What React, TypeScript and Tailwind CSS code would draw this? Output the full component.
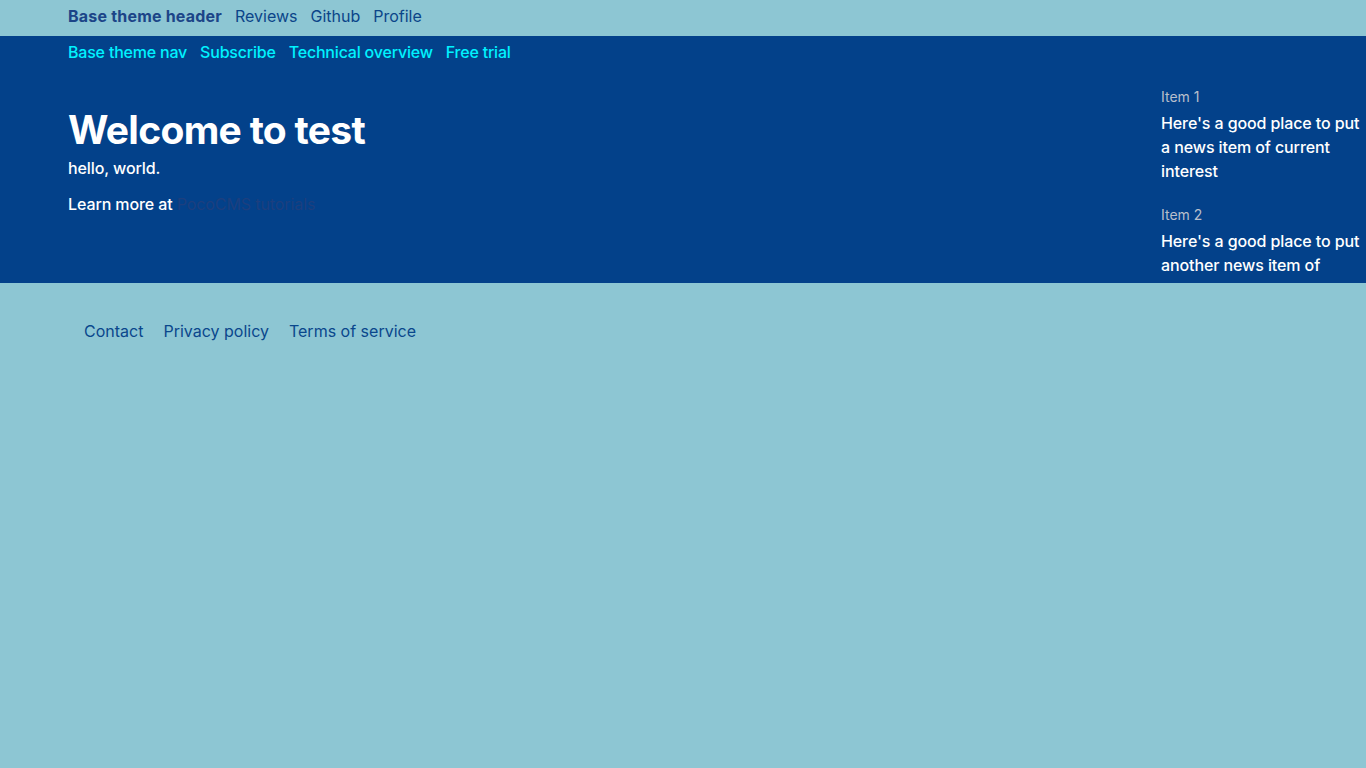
import React from 'react';

const headerLinks = ['Reviews', 'Github', 'Profile'];
const navLinks = ['Base theme nav', 'Subscribe', 'Technical overview', 'Free trial'];
const footerLinks = ['Contact', 'Privacy policy', 'Terms of service'];

const news = [
  { label: 'Item 1', text: "Here's a good place to put a news item of current interest" },
  { label: 'Item 2', text: "Here's a good place to put another news item of current interest" },
];

const App = () => {
  return (
    <div className="min-h-screen bg-[#8dc6d3] font-['Inter',sans-serif] text-base">
      {/* Header */}
      <header className="h-9 flex items-center gap-[13px] pl-[68px] pb-1 text-[#043f88]">
        <span className="font-bold text-[#1c4588] tracking-[0.2px]">Base theme header</span>
        {headerLinks.map((l) => (
          <a key={l} href="#" className="text-[#0b4589]">{l}</a>
        ))}
      </header>

      {/* Main */}
      <section className="h-[247px] bg-[#03418a] overflow-hidden flex">
        <div className="flex-1 pl-[68px]">
          <nav className="flex gap-[13px] pt-1 leading-6 font-medium tracking-[-0.2px] text-[#00f2ff]">
            {navLinks.map((l) => (
              <a key={l} href="#">{l}</a>
            ))}
          </nav>
          <h1 className="mt-[42px] text-[39px] leading-[48px] font-bold text-white tracking-[-0.7px]">Welcome to test</h1>
          <p className="mt-[2px] text-white font-medium leading-6 tracking-[-0.1px]">hello, world.</p>
          <p className="mt-3 text-white font-medium leading-6 tracking-[-0.1px]">
            Learn more at <a href="#" className="text-[#1c3f7f] font-normal">PocoCMS tutorials</a>
          </p>
        </div>
        <aside className="w-[205px] shrink-0 pt-[52px]">
          {news.map((n) => (
            <div key={n.label} className="mb-[23px]">
              <div className="text-sm text-[#b8bfcc] leading-[18px]">{n.label}</div>
              <p className="mt-[5px] text-white font-medium leading-6 pr-1 tracking-[-0.1px]">{n.text}</p>
            </div>
          ))}
        </aside>
      </section>

      {/* Footer */}
      <footer className="flex gap-5 pl-[84px] pt-[36px] text-[#0a478c]">
        {footerLinks.map((l) => (
          <a key={l} href="#">{l}</a>
        ))}
      </footer>
    </div>
  );
};

export default App;
